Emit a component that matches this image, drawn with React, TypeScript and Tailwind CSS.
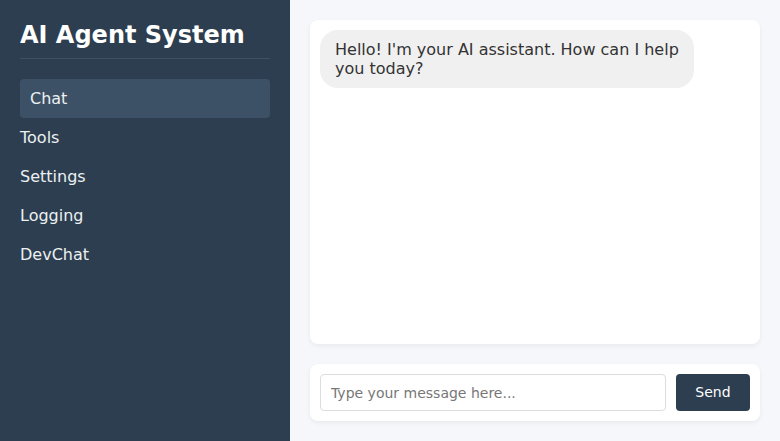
const NAV = ["Chat", "Tools", "Settings", "Logging", "DevChat"];

export default function App() {
  return (
    <div
      className="flex h-[441px] w-full overflow-hidden bg-[#f5f7fa]"
      style={{ fontFamily: '"DejaVu Sans", sans-serif' }}
    >
      <aside className="flex w-[290px] shrink-0 flex-col bg-[#2c3e50] px-5 pt-[21px] text-white">
        <h1 className="border-b border-[#3e5164] pb-[9px] text-[24px] font-bold leading-[28px]">
          AI Agent System
        </h1>
        <nav className="mt-5 flex flex-col">
          {NAV.map((item, i) => (
            <div
              key={item}
              className={
                i === 0
                  ? "flex h-[39px] items-center rounded bg-[#3d5166] px-[10px] text-[16px] text-[#ecf0f1]"
                  : "flex h-[39px] items-center text-[16px] text-[#ecf0f1]"
              }
            >
              {item}
            </div>
          ))}
        </nav>
      </aside>
      <main className="flex flex-1 flex-col gap-5 p-5">
        <section className="flex-1 rounded-lg bg-white p-[10px] shadow-[0_2px_5px_rgba(0,0,0,0.06)]">
          <div className="w-fit max-w-[374px] rounded-[18px] bg-[#f0f0f0] px-[15px] py-[10px] text-[16px] leading-[19px] text-[#333]">
            Hello! I'm your AI assistant. How can I help you today?
          </div>
        </section>
        <section className="flex gap-[10px] rounded-lg bg-white p-[10px] shadow-[0_2px_5px_rgba(0,0,0,0.06)]">
          <input
            className="h-[37px] flex-1 rounded border border-[#ddd] px-[10px] text-[14px] text-[#333] outline-none placeholder:text-[#777]"
            placeholder="Type your message here..."
          />
          <button className="h-[37px] w-[74px] rounded bg-[#2c3e50] text-[14px] text-white">
            Send
          </button>
        </section>
      </main>
    </div>
  );
}
